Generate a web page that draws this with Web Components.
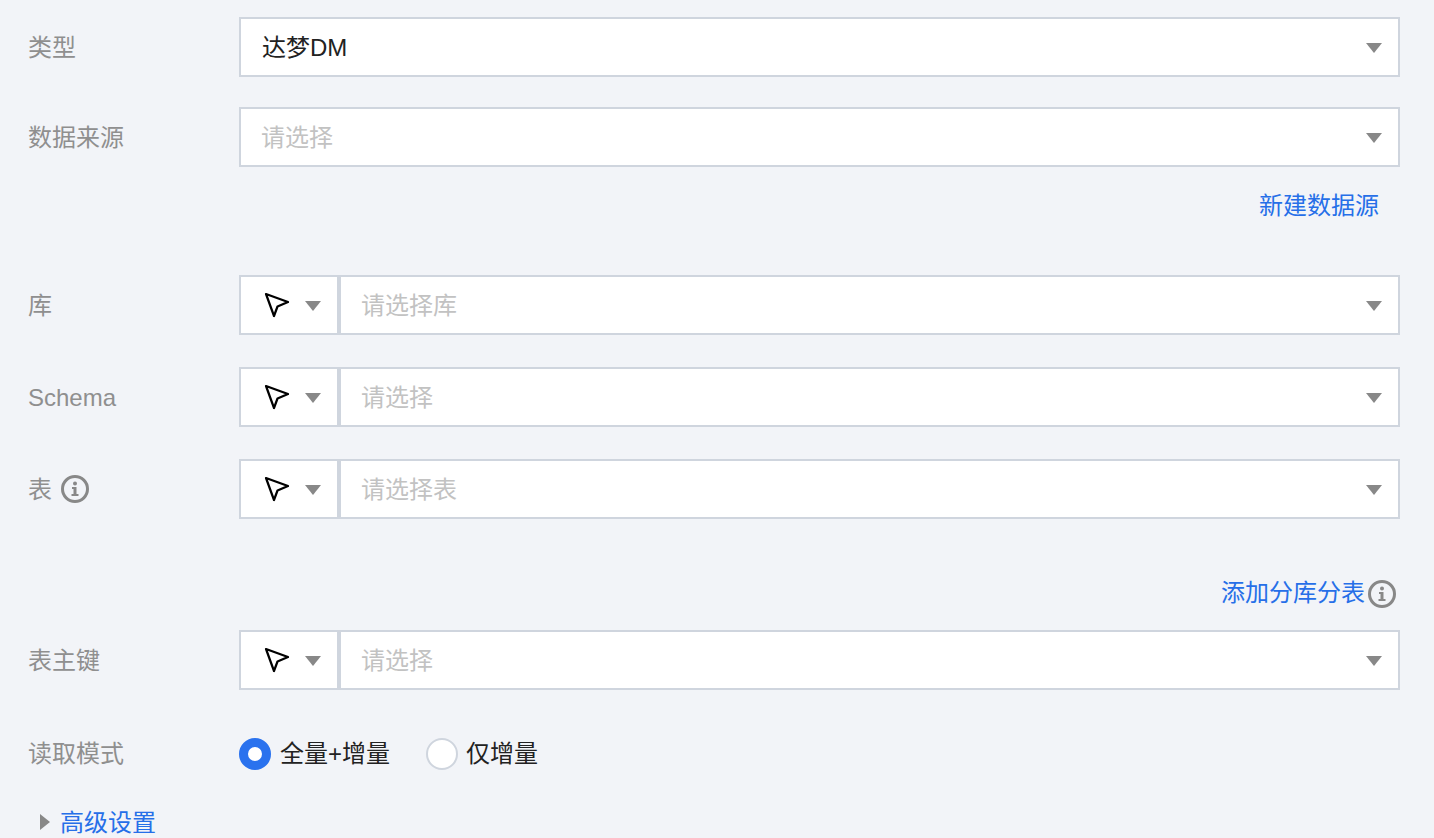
<!DOCTYPE html>
<html lang="zh">
<head>
<meta charset="utf-8">
<title>数据源配置</title>
<style>
  html, body { margin: 0; height: 838px; overflow: hidden; }
  body {
    background: #f2f4f8;
    font: 24px/36px "Liberation Sans", "Noto Sans CJK SC", sans-serif;
    color: #222;
  }
  #form { display: flex; flex-direction: column; padding: 17px 34px 0 28px; }
</style>
</head>
<body>
<div id="form">
  <form-row label="类型"><drop-select value="达梦DM"></drop-select></form-row>
  <form-row label="数据来源" style="margin-top:30px"><drop-select placeholder="请选择"></drop-select></form-row>
  <link-row style="margin-top:21px;padding-right:21px">新建数据源</link-row>

  <form-row label="库" style="margin-top:51px"><mode-select placeholder="请选择库"></mode-select></form-row>
  <form-row label="Schema" style="margin-top:32px"><mode-select placeholder="请选择"></mode-select></form-row>
  <form-row label="表" style="margin-top:32px">
    <info-icon slot="hint" style="margin-left:9px"></info-icon>
    <mode-select placeholder="请选择表"></mode-select>
  </form-row>
  <link-row style="margin-top:56px;padding-right:4px">添加分库分表<info-icon slot="after" style="margin:1px 0 0 3px"></info-icon></link-row>

  <form-row label="表主键" style="margin-top:19px"><mode-select placeholder="请选择"></mode-select></form-row>

  <form-row label="读取模式" style="margin-top:46px;--label-shift:0">
    <radio-group>
      <radio-item checked>全量+增量</radio-item>
      <radio-item style="--text-gap:8px">仅增量</radio-item>
    </radio-group>
  </form-row>
  <advanced-toggle style="margin-top:33px">高级设置</advanced-toggle>
</div>

<script>
  const ARROW = `<svg class="arrow" width="16" height="10" viewBox="0 0 16 10"><path d="M0 0H16L8 10Z" fill="#888"/></svg>`;

  class FormRow extends HTMLElement {
    constructor() {
      super();
      this.attachShadow({mode: 'open'}).innerHTML = `
<style>
  :host { display: flex; align-items: center; }
  #label { width: 211px; flex: none; display: flex; align-items: center; color: #8f8f8f; }
  span { padding-top: var(--label-shift, 2px); }
  #control { flex: 1; min-width: 0; }
</style>
<div id="label"><span>${this.getAttribute('label')}</span><slot name="hint"></slot></div>
<div id="control"><slot></slot></div>`;
    }
  }
  customElements.define('form-row', FormRow);

  class DropSelect extends HTMLElement {
    constructor() {
      super();
      let value = this.getAttribute('value');
      let text = value || this.getAttribute('placeholder');
      this.attachShadow({mode: 'open'}).innerHTML = `
<style>
  :host {
    display: flex;
    align-items: center;
    justify-content: space-between;
    box-sizing: border-box;
    height: 60px;
    padding: 0 16px 0 21px;
    background: #fff;
    border: 2px solid #cfd5de;
  }
  span { padding-top: 2px; color: ${value ? '#222' : '#c2c2c2'}; margin-left: ${value ? '0' : '-1px'}; }
  .arrow { display: block; margin-top: 2px; }
</style>
<span>${text}</span>${ARROW}`;
    }
  }
  customElements.define('drop-select', DropSelect);

  class ModeSelect extends HTMLElement {
    constructor() {
      super();
      this.attachShadow({mode: 'open'}).innerHTML = `
<style>
  :host { display: flex; }
  #mode {
    display: flex;
    align-items: center;
    box-sizing: border-box;
    width: 100px;
    height: 60px;
    padding-left: 23px;
    gap: 15px;
    background: #fff;
    border: 2px solid #cfd5de;
    flex: none;
  }
  svg { display: block; }
  .arrow { margin-top: 2px; }
  drop-select { flex: 1; }
</style>
<div id="mode">
  <svg width="26" height="26" viewBox="0 0 26 26"><path d="M2 2L24 10L13.500 14.500L10 24Z" fill="#fff" stroke="#000" stroke-width="2.200" stroke-linejoin="round"/></svg>
  ${ARROW}
</div>
<drop-select placeholder="${this.getAttribute('placeholder')}"></drop-select>`;
    }
  }
  customElements.define('mode-select', ModeSelect);

  class InfoIcon extends HTMLElement {
    constructor() {
      super();
      this.attachShadow({mode: 'open'}).innerHTML = `
<style>
  :host { display: inline-flex; flex: none; }
  svg { display: block; }
</style>
<svg width="28" height="28" viewBox="0 0 28 28">
  <circle cx="14" cy="14" r="12.500" fill="none" stroke="#888" stroke-width="3"/>
  <circle cx="14" cy="8.500" r="2" fill="#888"/>
  <path d="M11 12H15.500V19H17.500V21H10.500V19H12.500V14H11Z" fill="#888"/>
</svg>`;
    }
  }
  customElements.define('info-icon', InfoIcon);

  class LinkRow extends HTMLElement {
    constructor() {
      super();
      this.attachShadow({mode: 'open'}).innerHTML = `
<style>
  :host { display: flex; justify-content: flex-end; align-items: center; color: #266fe8; }
</style>
<slot></slot><slot name="after"></slot>`;
    }
  }
  customElements.define('link-row', LinkRow);

  class RadioGroup extends HTMLElement {
    constructor() {
      super();
      this.attachShadow({mode: 'open'}).innerHTML = `
<style>
  :host { display: flex; gap: 36px; }
</style>
<slot></slot>`;
    }
  }
  customElements.define('radio-group', RadioGroup);

  class RadioItem extends HTMLElement {
    constructor() {
      super();
      let on = this.hasAttribute('checked');
      this.attachShadow({mode: 'open'}).innerHTML = `
<style>
  :host { display: inline-flex; align-items: center; gap: var(--text-gap, 9px); color: #222; }
  i {
    box-sizing: border-box;
    width: 32px;
    height: 32px;
    border-radius: 50%;
    background: #fff;
    border: ${on ? '9px solid #2a72ee' : '2px solid #cfd5de'};
  }
</style>
<i></i><slot></slot>`;
    }
  }
  customElements.define('radio-item', RadioItem);

  class AdvancedToggle extends HTMLElement {
    constructor() {
      super();
      this.attachShadow({mode: 'open'}).innerHTML = `
<style>
  :host { display: flex; align-items: center; gap: 10px; padding-left: 12px; color: #266fe8; }
  svg { display: block; margin-bottom: 2px; }
</style>
<svg width="10" height="16" viewBox="0 0 10 16"><path d="M0 0L10 8L0 16Z" fill="#888"/></svg>
<slot></slot>`;
    }
  }
  customElements.define('advanced-toggle', AdvancedToggle);
</script>
</body>
</html>
